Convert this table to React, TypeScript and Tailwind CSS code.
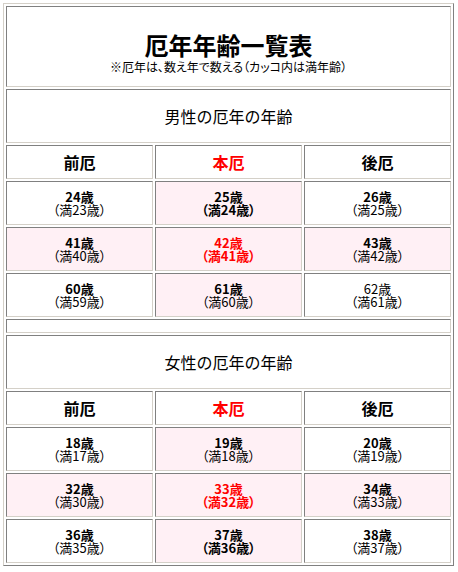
import React from "react";

type Cell = {
  age: string;
  full: string;
  pink?: boolean;
  red?: boolean;
  boldAge?: boolean;
  boldFull?: boolean;
};

const male: Cell[][] = [
  [
    { age: "24歳", full: "（満23歳）", boldAge: true },
    { age: "25歳", full: "（満24歳）", pink: true, boldAge: true, boldFull: true },
    { age: "26歳", full: "（満25歳）", boldAge: true },
  ],
  [
    { age: "41歳", full: "（満40歳）", pink: true, boldAge: true },
    { age: "42歳", full: "（満41歳）", pink: true, red: true, boldAge: true, boldFull: true },
    { age: "43歳", full: "（満42歳）", pink: true, boldAge: true },
  ],
  [
    { age: "60歳", full: "（満59歳）", boldAge: true },
    { age: "61歳", full: "（満60歳）", pink: true, boldAge: true },
    { age: "62歳", full: "（満61歳）" },
  ],
];

const female: Cell[][] = [
  [
    { age: "18歳", full: "（満17歳）", boldAge: true },
    { age: "19歳", full: "（満18歳）", pink: true, boldAge: true },
    { age: "20歳", full: "（満19歳）", boldAge: true },
  ],
  [
    { age: "32歳", full: "（満30歳）", pink: true, boldAge: true },
    { age: "33歳", full: "（満32歳）", pink: true, red: true, boldAge: true, boldFull: true },
    { age: "34歳", full: "（満33歳）", pink: true, boldAge: true },
  ],
  [
    { age: "36歳", full: "（満35歳）", boldAge: true },
    { age: "37歳", full: "（満36歳）", pink: true, boldAge: true, boldFull: true },
    { age: "38歳", full: "（満37歳）", boldAge: true },
  ],
];

// inset cell border like an old border=1 table
const td = "p-0 border border-solid border-t-[#808080] border-l-[#808080] border-r-[#d4d0c8] border-b-[#d4d0c8]";

function Section({ title, rows }: { title: string; rows: Cell[][] }) {
  return (
    <>
      <tr>
        <td colSpan={3} className={`${td} bg-white`}>
          <div className="h-[52px] flex items-center justify-center text-[16px] leading-[18px]">{title}</div>
        </td>
      </tr>
      <tr>
        {["前厄", "本厄", "後厄"].map((h, i) => (
          <td key={h} className={`${td} bg-white`}>
            <div
              className={`h-[32px] flex items-center justify-center text-[16px] font-bold leading-[18px] ${
                i === 1 ? "text-[#ff0000]" : "text-black"
              }`}
            >
              {h}
            </div>
          </td>
        ))}
      </tr>
      {rows.map((row, r) => (
        <tr key={r}>
          {row.map((c) => (
            <td key={c.age} className={`${td} ${c.pink ? "bg-[#fff0f5]" : "bg-white"}`}>
              <div
                className={`h-[42px] flex flex-col items-center justify-center text-[13px] leading-[13px] [font-feature-settings:'palt'] ${
                  c.red ? "text-[#ff0000]" : "text-black"
                }`}
              >
                <span className={c.boldAge ? "font-bold" : "font-normal"}>{c.age}</span>
                <span className={c.boldFull ? "font-bold" : "font-normal"}>{c.full}</span>
              </div>
            </td>
          ))}
        </tr>
      ))}
    </>
  );
}

export default function App() {
  return (
    <div className="min-h-screen bg-white pl-[3px] pt-[3px] font-['Noto_Sans_CJK_JP',sans-serif] text-black">
      <table className="w-[451px] table-fixed border-separate border-spacing-[2px] border border-solid border-t-[#d4d0c8] border-l-[#d4d0c8] border-r-[#808080] border-b-[#808080]">
        <tbody>
          <tr>
            <td colSpan={3} className={`${td} bg-white`}>
              <div className="h-[79px] flex flex-col items-center pt-[24px]">
                <h1 className="text-[24px] font-bold leading-[28px]">厄年年齢一覧表</h1>
                <p className="text-[12px] leading-[14px] mt-[1px] [font-feature-settings:'palt']">
                  ※厄年は、数え年で数える（カッコ内は満年齢）
                </p>
              </div>
            </td>
          </tr>
          <Section title="男性の厄年の年齢" rows={male} />
          <tr>
            <td colSpan={3} className={`${td} bg-white`}>
              <div className="h-[12px]" />
            </td>
          </tr>
          <Section title="女性の厄年の年齢" rows={female} />
        </tbody>
      </table>
    </div>
  );
}
